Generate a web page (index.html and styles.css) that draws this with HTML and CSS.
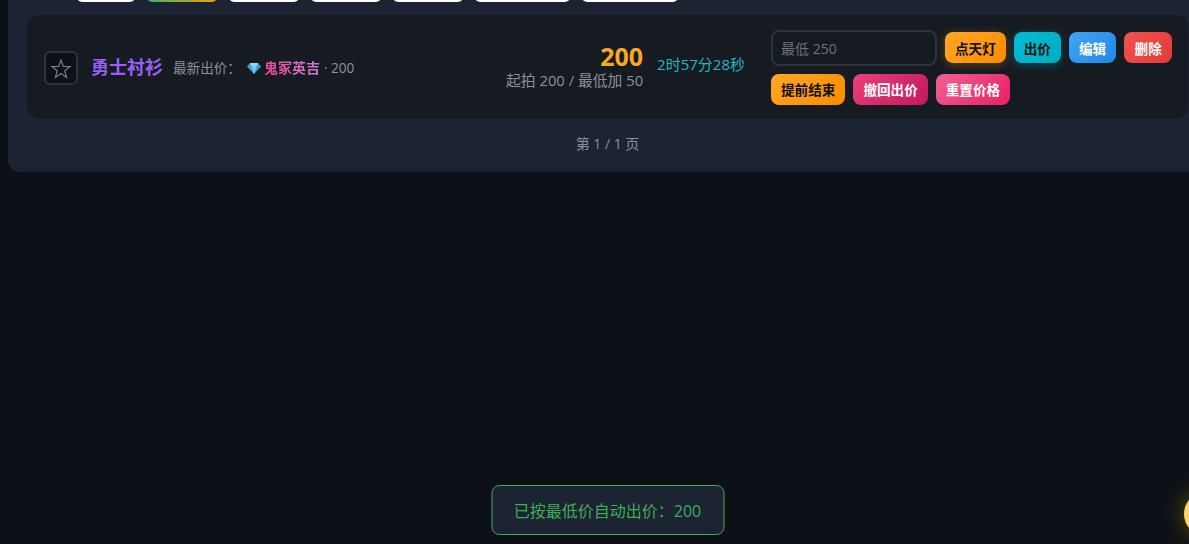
FILE: index.html
```html
<!DOCTYPE html>
<html lang="zh-CN">
<head>
<meta charset="utf-8">
<title>拍卖</title>
<link rel="stylesheet" href="styles.css">
</head>
<body>
<main class="panel">
  <div class="tabs">
    <span class="tab t58"></span>
    <span class="tab t70 active"></span>
    <span class="tab t70"></span>
    <span class="tab t70"></span>
    <span class="tab t70"></span>
    <span class="tab t95"></span>
    <span class="tab t96"></span>
  </div>
  <article class="card">
    <button class="star" type="button" aria-label="收藏">
      <svg viewBox="0 0 20 20" width="22" height="22"><polygon points="10,1.8 12.1,7.6 18.3,7.8 13.4,11.6 15.1,17.6 10,14.1 4.9,17.6 6.6,11.6 1.7,7.8 7.9,7.6" fill="none" stroke="#7d838c" stroke-width="1"/></svg>
    </button>
    <div class="info">
      <span class="title">勇士衬衫</span>
      <span class="latest">最新出价：</span>
      <span class="bidder">
        <svg class="gem" viewBox="0 0 14 12" width="14" height="12"><polygon points="3,1 11,1 14,4.5 7,12 0,4.5" fill="#3f9fdc"/><polygon points="4.5,4.5 9.5,4.5 7,12" fill="#6fcdf5"/><polygon points="3,1 11,1 9.5,4.5 4.5,4.5" fill="#8ddcf8"/></svg>
        <b class="name">鬼冢英吉</b>
        <span class="amount">· 200</span>
      </span>
    </div>
    <div class="price">
      <strong class="now">200</strong>
      <span class="rule">起拍 200 / 最低加 50</span>
    </div>
    <span class="time">2时57分28秒</span>
    <div class="actions">
      <input class="bid" type="text" placeholder="最低 250">
      <button class="btn orange glow-o" type="button">点天灯</button>
      <button class="btn cyan" type="button">出价</button>
      <button class="btn blue" type="button">编辑</button>
      <button class="btn red" type="button">删除</button>
      <button class="btn orange" type="button">提前结束</button>
      <button class="btn crimson" type="button">撤回出价</button>
      <button class="btn pink" type="button">重置价格</button>
    </div>
  </article>
  <p class="pager">第 1 / 1 页</p>
</main>
<div class="toast">已按最低价自动出价：200</div>
<div class="orb"></div>
</body>
</html>
```
FILE: styles.css
```css
* { box-sizing: border-box; }
html, body { height: 100%; }
body {
  margin: 0;
  overflow: hidden;
  position: relative;
  background: #0d1117;
  font-family: "Open Sans", "Noto Sans CJK SC", sans-serif;
  color: #9aa1ab;
}
.panel {
  width: 1199px;
  height: 172px;
  margin-left: 8px;
  padding: 0 19px;
  background: #1c2333;
  border-radius: 0 0 12px 12px;
}
.tabs {
  display: flex;
  align-items: flex-end;
  gap: 12px;
  height: 2px;
  padding-left: 50px;
}
.tab { flex: none; height: 10px; background: #fff; border-radius: 6px; }
.t58 { width: 58px; }
.t70 { width: 70px; }
.t95 { width: 95px; }
.t96 { width: 96px; }
.active { background: linear-gradient(90deg, #3fb36e, #f09d0e); }
.card {
  display: flex;
  align-items: center;
  height: 104px;
  margin-top: 13px;
  padding: 0 15px 0 17px;
  background: #161b22;
  border-radius: 12px;
}
.star {
  display: flex;
  align-items: center;
  justify-content: center;
  flex: none;
  width: 34px;
  height: 34px;
  margin-top: 2px;
  padding: 2px 0 0;
  background: #0d1117;
  border: 2px solid #2d333f;
  border-radius: 6px;
}
.info {
  flex: 1;
  display: flex;
  align-items: center;
  margin-left: 13px;
  min-width: 0;
}
.title { margin-top: -2px; font-size: 18px; font-weight: 700; color: #9b5ff7; }
.latest { margin-left: 10px; font-size: 13.6px; color: #8b919a; }
.bidder { display: flex; align-items: center; font-size: 13.6px; color: #8b919a; margin-left: 6px; }
.gem { margin-right: 3px; margin-top: 2px; }
.name {
  background: linear-gradient(90deg, #ec4899, #c77fd0);
  -webkit-background-clip: text;
  background-clip: text;
  color: transparent;
  font-size: 14px;
  font-weight: 700;
}
.amount { margin-left: 4px; }
.price { display: flex; flex-direction: column; align-items: flex-end; margin-top: -3px; }
.now { font-size: 25px; line-height: 28px; font-weight: 700; color: #f9a826; }
.rule { font-size: 14.8px; line-height: 20px; color: #8b919a; }
.time { margin: -8px 0 0 14px; font-size: 15px; color: #26b3c4; white-space: nowrap; }
.actions {
  display: flex;
  flex-wrap: wrap;
  align-items: center;
  gap: 8px;
  flex: none;
  width: 402px;
  margin-left: 26px;
}
.bid {
  width: 166px;
  height: 36px;
  padding: 2px 8px 0;
  background: #161b22;
  border: 2px solid #2d333f;
  border-radius: 8px;
  font: 14px "Open Sans", "Noto Sans CJK SC", sans-serif;
  color: #ddd;
}
.bid::placeholder { color: #6b7178; }
.btn {
  height: 31px;
  padding: 0 10px;
  border: 0;
  border-radius: 8px;
  font: 700 13.6px "Open Sans", "Noto Sans CJK SC", sans-serif;
  color: #fff;
}
.orange { background: linear-gradient(135deg, #ffa726, #fb8c00); color: #111; }
.glow-o { box-shadow: 0 2px 8px rgba(255, 152, 0, .3); }
.cyan { background: linear-gradient(135deg, #00bcd4, #00acc1); color: #111; box-shadow: 0 2px 10px rgba(0, 188, 212, .3); }
.blue { background: linear-gradient(135deg, #42a5f5, #1e88e5); }
.red { background: linear-gradient(135deg, #ef5350, #e53935); padding: 0 10.4px; }
.crimson { background: linear-gradient(135deg, #ec407a, #c2185b); }
.pink { background: linear-gradient(135deg, #f06292, #e91e63); }
.pager { margin: 14px 0 0; text-align: center; font-size: 14px; color: #8b919a; }
.toast {
  position: absolute;
  left: 607.5px;
  bottom: 9px;
  transform: translateX(-50%);
  width: 233px;
  height: 50px;
  display: flex;
  align-items: center;
  justify-content: center;
  background: #1c2333;
  border: 1px solid #3fae52;
  border-radius: 8px;
  font-size: 16px;
  color: #3fae52;
  white-space: nowrap;
}
.orb {
  position: absolute;
  left: 1184px;
  top: 492px;
  width: 44px;
  height: 44px;
  border-radius: 50%;
  background: #ffd666;
  box-shadow: 0 0 22px rgba(255, 193, 7, .35);
}
```
